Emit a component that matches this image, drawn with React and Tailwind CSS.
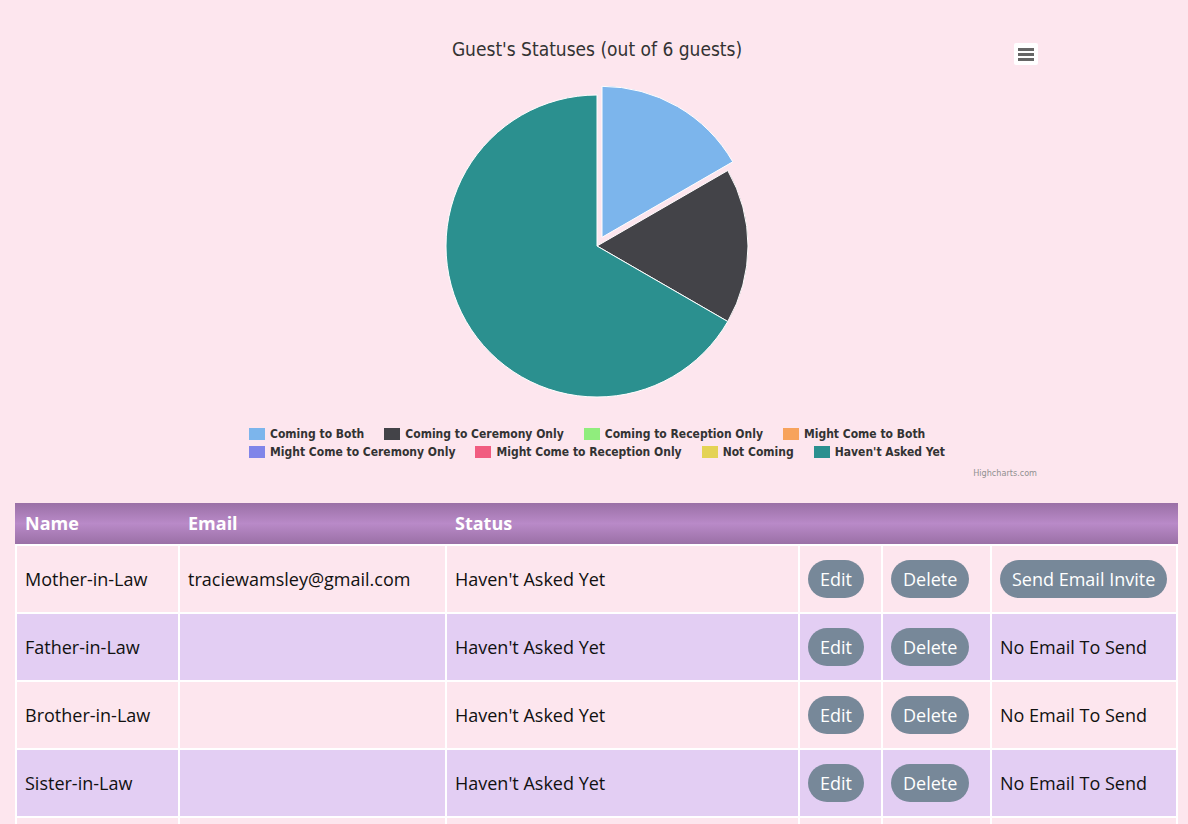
import React from 'react';

const legendRows = [
  [
    ['Coming to Both', '#7cb5ec'],
    ['Coming to Ceremony Only', '#434348'],
    ['Coming to Reception Only', '#90ed7d'],
    ['Might Come to Both', '#f7a35c'],
  ],
  [
    ['Might Come to Ceremony Only', '#8085e9'],
    ['Might Come to Reception Only', '#f15c80'],
    ['Not Coming', '#e4d354'],
    ["Haven't Asked Yet", '#2b908f'],
  ],
];

const guests = [
  { name: 'Mother-in-Law', email: 'traciewamsley@gmail.com' },
  { name: 'Father-in-Law', email: '' },
  { name: 'Brother-in-Law', email: '' },
  { name: 'Sister-in-Law', email: '' },
  { name: 'Cousin', email: '' },
];

const cols = 'grid grid-cols-[161px_265px_351px_81px_107px_184px] gap-x-[2px]';

function Pill({ children }) {
  return (
    <button className="h-[38px] whitespace-nowrap rounded-full bg-[#778899] px-3 text-[18px] leading-none text-white">
      {children}
    </button>
  );
}

function GuestChart() {
  return (
    <div className="relative ml-[147px] w-[900px]" style={{ fontFamily: '"DejaVu Sans Condensed", "DejaVu Sans", sans-serif' }}>
      <h2 className="pt-[37px] text-center text-[19px] leading-[24px] text-[#333333]">
        Guest's Statuses (out of 6 guests)
      </h2>

      {/* export menu button */}
      <div className="absolute left-[867px] top-[43px] flex h-[22px] w-[24px] flex-col items-center justify-center gap-[2px] rounded-[2px] bg-white">
        <span className="h-[3px] w-[16px] bg-[#666666]" />
        <span className="h-[3px] w-[16px] bg-[#666666]" />
        <span className="h-[3px] w-[16px] bg-[#666666]" />
      </div>

      <svg width="900" height="340" className="block">
        <path d="M455 176.3 L455 25.3 A151 151 0 0 1 585.77 100.8 Z" fill="#7cb5ec" stroke="#ffffff" strokeWidth="1" />
        <path d="M450 185 L580.77 109.5 A151 151 0 0 1 580.77 260.5 Z" fill="#434348" stroke="#ffffff" strokeWidth="1" />
        <path d="M450 185 L580.77 260.5 A151 151 0 1 1 450 34 Z" fill="#2b908f" stroke="#ffffff" strokeWidth="1" />
      </svg>

      <div className="mt-[24px] flex justify-center">
        <div className="flex flex-col">
          {legendRows.map((row, i) => (
            <div key={i} className="flex h-[18px] items-center gap-[20px]">
              {row.map(([label, color]) => (
                <div key={label} className="flex items-center gap-[5px]">
                  <span className="h-[12px] w-[16px]" style={{ backgroundColor: color }} />
                  <span className="text-[12px] font-bold text-[#333333]">{label}</span>
                </div>
              ))}
            </div>
          ))}
        </div>
      </div>

      <div className="mt-[6px] pr-[10px] text-right text-[9px] leading-[12px] text-[#909090]">Highcharts.com</div>
    </div>
  );
}

export default function App() {
  return (
    <div className="min-h-[824px] bg-[#fde6ee] pb-10" style={{ fontFamily: '"Open Sans", sans-serif' }}>
      <GuestChart />

      <div className="ml-[15px] mt-[24px] w-[1163px]">
        <div className={`${cols} h-[41px] items-center bg-gradient-to-b from-[#9a70a6] via-[#b98ac8] to-[#9a70a6] px-[2px] text-[18px] font-bold text-white`}>
          <div className="px-2">Name</div>
          <div className="px-2">Email</div>
          <div className="px-2">Status</div>
          <div />
          <div />
          <div />
        </div>

        <div className="flex flex-col gap-[2px] bg-white p-[2px]">
          {guests.map((g, i) => (
            <div
              key={g.name}
              className={`${cols} h-[66px] items-stretch bg-white text-[18px] text-[#111111]`}
            >
              {[
                g.name,
                g.email,
                "Haven't Asked Yet",
                <Pill>Edit</Pill>,
                <Pill>Delete</Pill>,
                g.email ? <Pill>Send Email Invite</Pill> : 'No Email To Send',
              ].map((c, j) => (
                <div
                  key={j}
                  className={`flex items-center px-2 ${i % 2 === 0 ? 'bg-[#fde6ee]' : 'bg-[#e3cef3]'}`}
                >
                  {c}
                </div>
              ))}
            </div>
          ))}
        </div>
      </div>
    </div>
  );
}
